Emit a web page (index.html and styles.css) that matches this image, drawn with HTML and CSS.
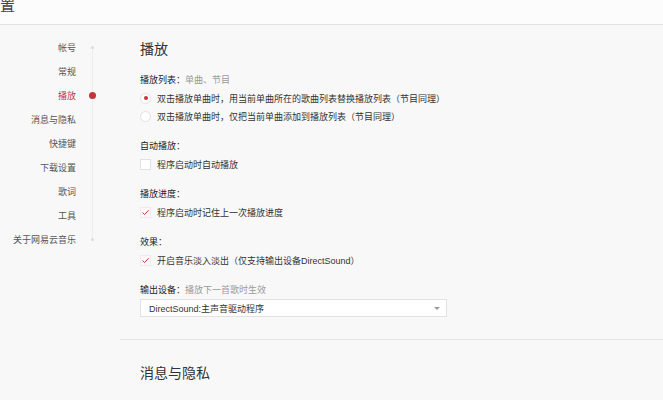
FILE: index.html
```html
<!DOCTYPE html>
<html lang="zh-CN">
  <head>
    <meta charset="UTF-8" />
    <meta name="viewport" content="width=device-width, initial-scale=1.0" />
    <title>设置</title>
    <link rel="stylesheet" href="styles.css">
  </head>
  <body>
    <div class="header">
      <h1 class="page-title">设置</h1>
    </div>
    <div class="main">
      <ul class="nav">
        <li class="nav-item nav-first"><span class="nav-label">帐号</span><span class="nav-mark"><i class="dot-end"></i></span></li>
        <li class="nav-item"><span class="nav-label">常规</span><span class="nav-mark"></span></li>
        <li class="nav-item active"><span class="nav-label">播放</span><span class="nav-mark"><i class="dot-active"></i></span></li>
        <li class="nav-item"><span class="nav-label">消息与隐私</span><span class="nav-mark"></span></li>
        <li class="nav-item"><span class="nav-label">快捷键</span><span class="nav-mark"></span></li>
        <li class="nav-item"><span class="nav-label">下载设置</span><span class="nav-mark"></span></li>
        <li class="nav-item"><span class="nav-label">歌词</span><span class="nav-mark"></span></li>
        <li class="nav-item"><span class="nav-label">工具</span><span class="nav-mark"></span></li>
        <li class="nav-item nav-last"><span class="nav-label">关于网易云音乐</span><span class="nav-mark"><i class="dot-end"></i></span></li>
      </ul>
      <div class="content">
        <section class="section section-first">
          <h2 class="section-title">播放</h2>
          <div class="group">
            <div class="group-label">播放列表：<span class="hint">单曲、节目</span></div>
            <div class="option"><span class="radio checked"></span>双击播放单曲时，用当前单曲所在的歌曲列表替换播放列表（节目同理）</div>
            <div class="option"><span class="radio"></span>双击播放单曲时，仅把当前单曲添加到播放列表（节目同理）</div>
          </div>
          <div class="group">
            <div class="group-label">自动播放：</div>
            <div class="option"><span class="checkbox"></span>程序启动时自动播放</div>
          </div>
          <div class="group">
            <div class="group-label">播放进度：</div>
            <div class="option">
              <span class="checkbox checked">
                <svg width="11" height="11" viewBox="0 0 11 11"><path d="M2 5.6 L4.4 8 L9.2 2.8" fill="none" stroke="#c3343c" stroke-width="1.2"/></svg>
              </span>程序启动时记住上一次播放进度
            </div>
          </div>
          <div class="group">
            <div class="group-label">效果：</div>
            <div class="option">
              <span class="checkbox checked">
                <svg width="11" height="11" viewBox="0 0 11 11"><path d="M2 5.6 L4.4 8 L9.2 2.8" fill="none" stroke="#c3343c" stroke-width="1.2"/></svg>
              </span>开启音乐淡入淡出（仅支持输出设备DirectSound）
            </div>
          </div>
          <div class="group">
            <div class="group-label strong">输出设备：<span class="hint">播放下一首歌时生效</span></div>
            <div class="select">
              <span>DirectSound:主声音驱动程序</span>
              <i class="arrow"></i>
            </div>
          </div>
        </section>
        <section class="section">
          <h2 class="section-title">消息与隐私</h2>
        </section>
      </div>
    </div>
  </body>
</html>
```

FILE: styles.css
```css
body {
  margin: 0;
  background: #f8f8f8;
  font-family: "Liberation Sans", "Noto Sans CJK SC", sans-serif;
  font-size: 9px;
  color: #333;
  overflow: hidden;
}

.header {
  height: 24px;
  background: #fcfcfc;
  border-bottom: 1px solid #e2e2e2;
  overflow: hidden;
}

.page-title {
  margin: -2px 0 0 -15px;
  font-size: 15px;
  line-height: 15px;
  font-weight: normal;
  color: #444;
}

.main {
  display: flex;
}

.nav {
  list-style: none;
  margin: 0;
  padding: 10px 0 0;
  width: 120px;
  flex-shrink: 0;
}

.nav-item {
  display: flex;
  align-items: center;
  height: 24px;
}

.nav-label {
  width: 76px;
  text-align: right;
  color: #555;
}

.active .nav-label {
  color: #c3343c;
}

.nav-mark {
  width: 10px;
  height: 24px;
  margin-left: 11px;
  display: flex;
  align-items: center;
  justify-content: center;
  background: linear-gradient(#ededed, #ededed) center / 1px 100% no-repeat;
}

.nav-first .nav-mark {
  background-position: center bottom;
  background-size: 1px 50%;
}

.nav-last .nav-mark {
  background-position: center top;
  background-size: 1px 50%;
}

.dot-end {
  width: 3px;
  height: 3px;
  border-radius: 50%;
  background: #dcdcdc;
}

.dot-active {
  width: 7px;
  height: 7px;
  border-radius: 50%;
  background: #c3343c;
}

.content {
  flex: 1;
}

.section {
  padding-left: 20px;
}

.section-first {
  padding-top: 14px;
  padding-bottom: 22px;
}

.section + .section {
  border-top: 1px solid #e6e6e6;
  padding-top: 23px;
}

.section-title {
  margin: 0 0 3px;
  font-size: 14px;
  line-height: 20px;
  font-weight: normal;
  color: #333;
}

.group {
  margin-top: 12px;
}

.group-label {
  line-height: 18px;
  color: #222;
}

.hint {
  color: #9a9a9a;
}

.option {
  display: flex;
  align-items: center;
  height: 18px;
  color: #333;
}

.radio,
.checkbox {
  width: 11px;
  height: 11px;
  box-sizing: border-box;
  border: 1px solid #e2e2e2;
  background: #fff;
  margin-right: 6px;
  display: flex;
  align-items: center;
  justify-content: center;
  flex-shrink: 0;
}

.radio {
  border-radius: 50%;
}

.radio.checked::after {
  content: "";
  width: 4px;
  height: 4px;
  border-radius: 50%;
  background: #c3343c;
}

.checkbox.checked {
  border-color: #f1eaea;
  background: #fbf7f7;
}

.select {
  width: 307px;
  height: 18px;
  box-sizing: border-box;
  border: 1px solid #e2e2e2;
  background: #fff;
  display: flex;
  align-items: center;
  justify-content: space-between;
  padding: 0 6px 0 8px;
  color: #333;
}

.arrow {
  width: 0;
  height: 0;
  border-left: 3px solid transparent;
  border-right: 3px solid transparent;
  border-top: 3px solid #999;
}
```
